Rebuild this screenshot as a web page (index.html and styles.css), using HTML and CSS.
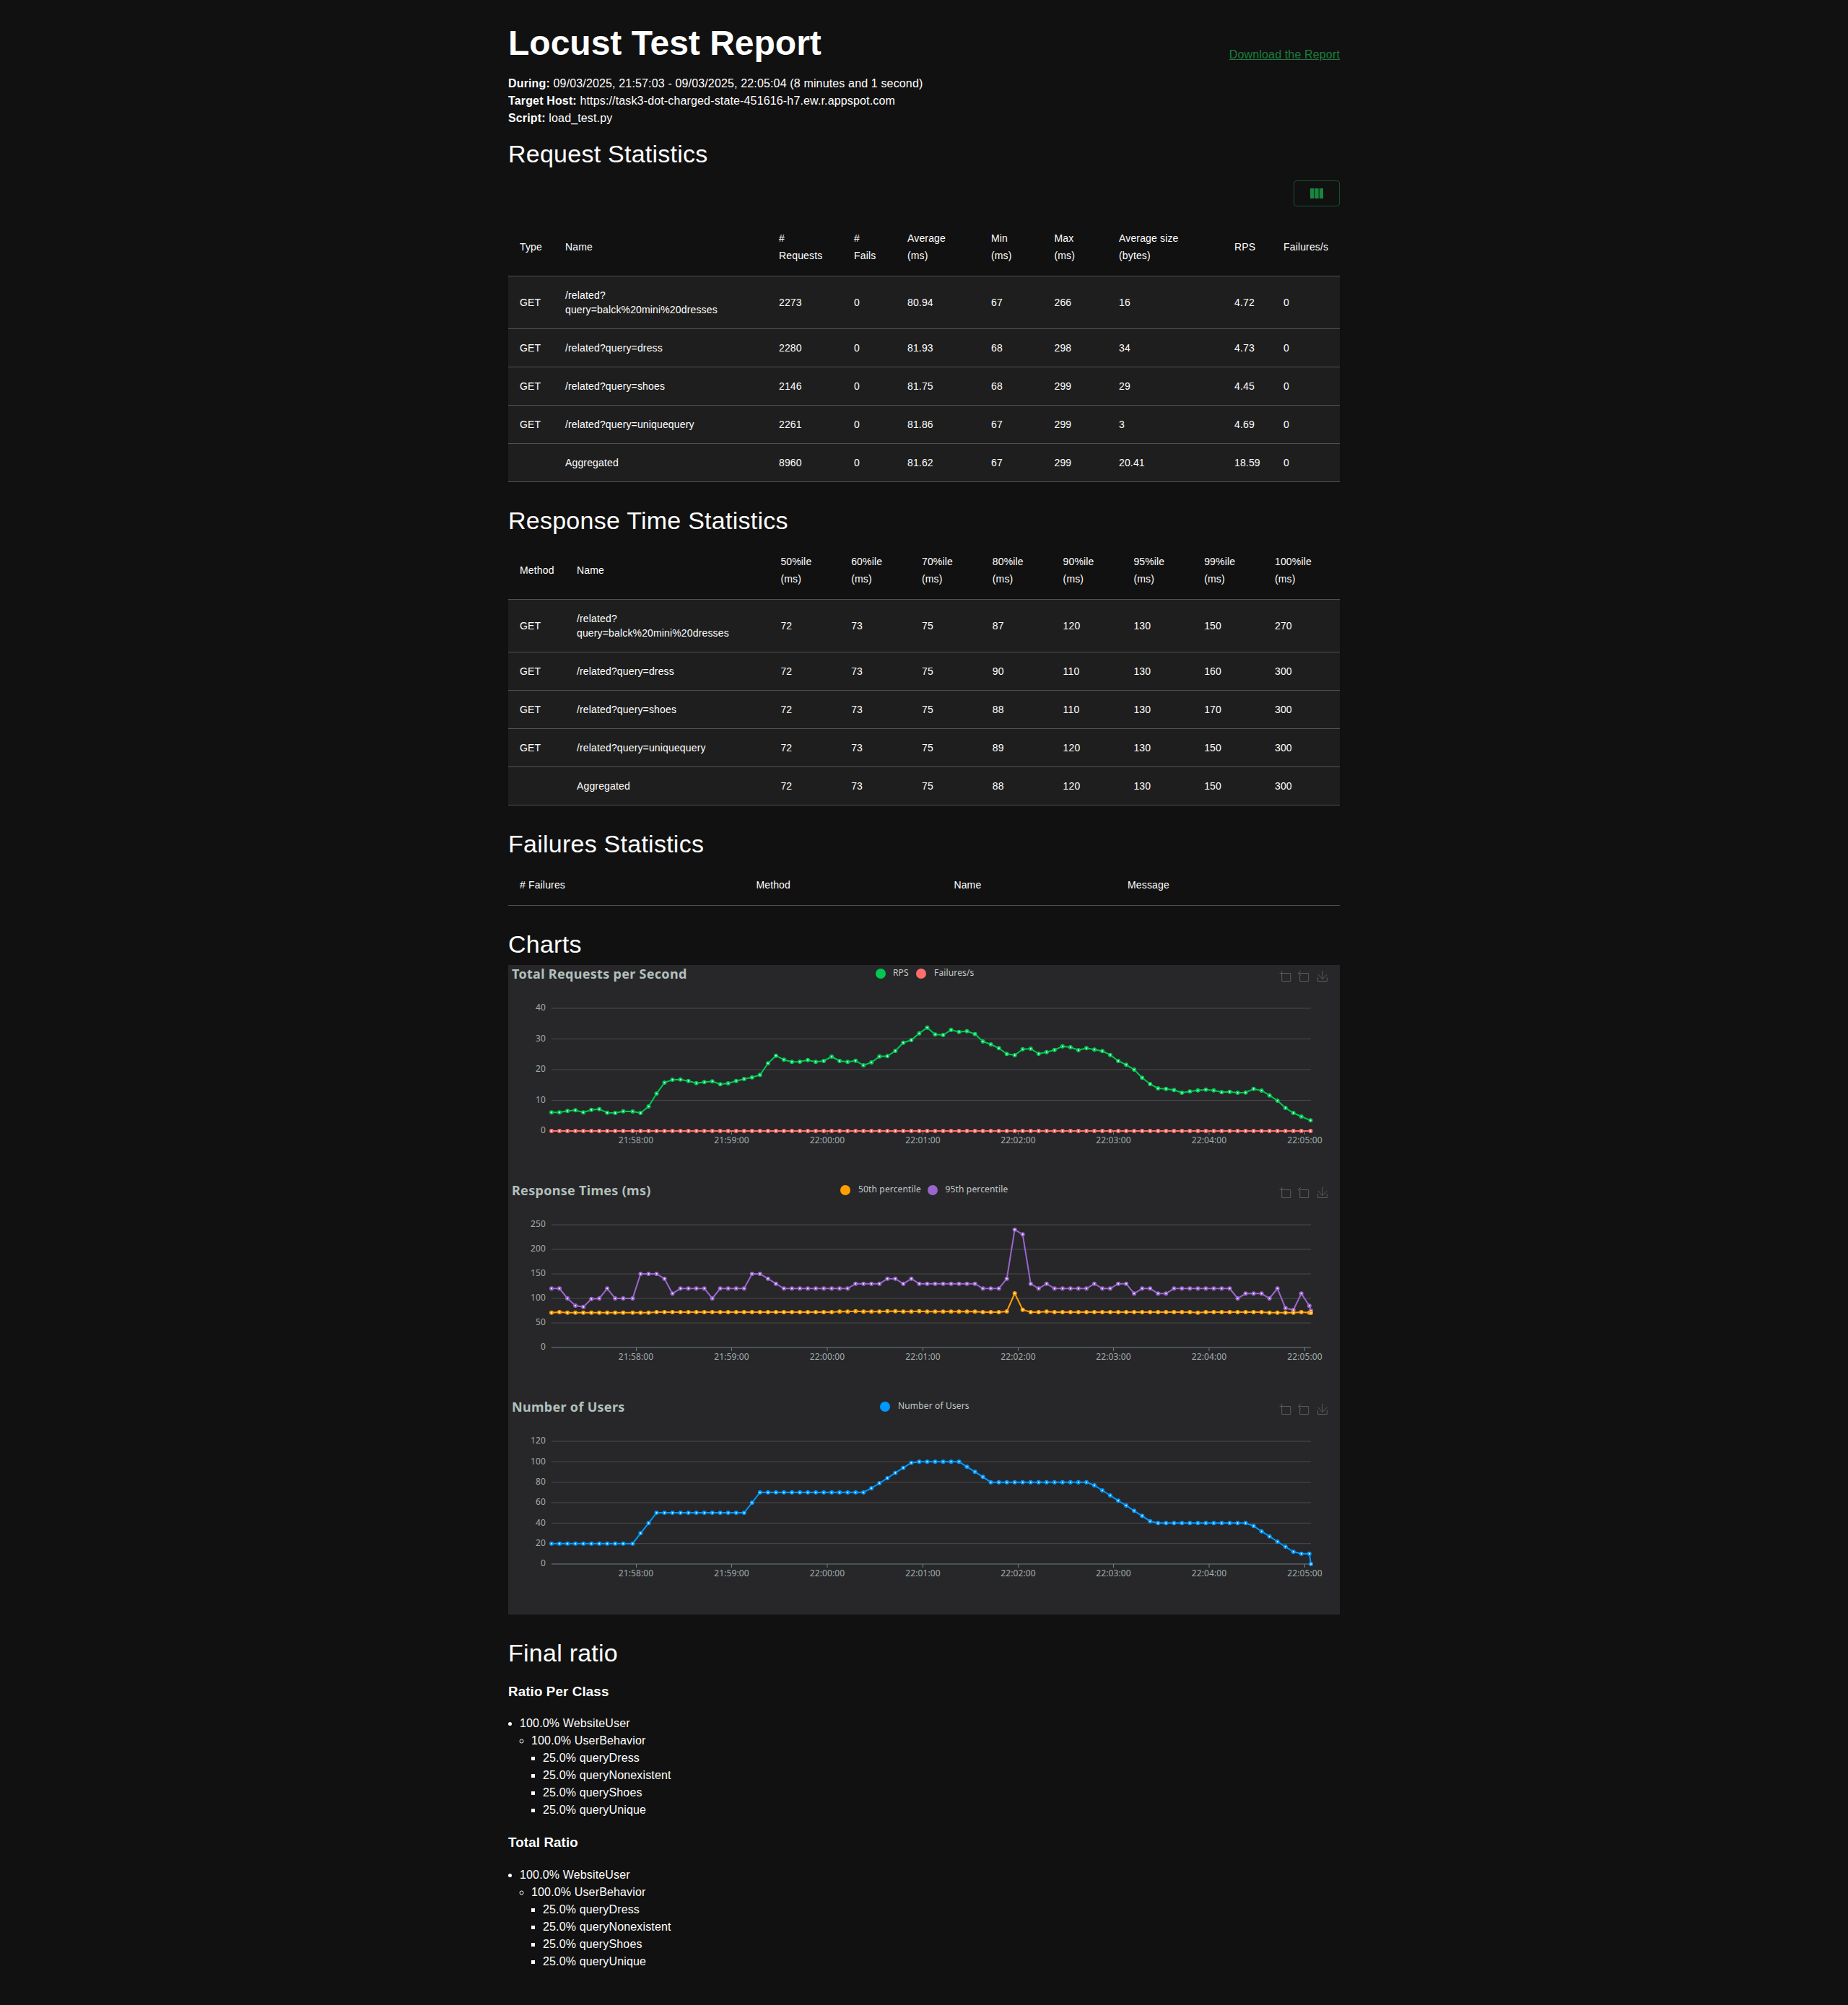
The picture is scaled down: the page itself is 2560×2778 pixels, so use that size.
FILE: index.html
```html
<!DOCTYPE html>
<html lang="en">
<head>
<meta charset="utf-8">
<title>Locust Test Report</title>
<link rel="stylesheet" href="styles.css">
</head>
<body>
<main class="report">
  <header class="top">
    <h1>Locust Test Report</h1>
    <a class="download" href="#">Download the Report</a>
  </header>
  <div class="meta">
    <p><b>During:</b> 09/03/2025, 21:57:03 - 09/03/2025, 22:05:04 (8 minutes and 1 second)</p>
    <p><b>Target Host:</b> https://task3-dot-charged-state-451616-h7.ew.r.appspot.com</p>
    <p><b>Script:</b> load_test.py</p>
  </div>

  <h2>Request Statistics</h2>
  <div class="tools">
    <button class="columns" type="button" aria-label="Columns">
      <svg viewBox="0 0 24 24" width="24" height="24"><path d="M14.67 5v14H9.33V5h5.34zm1 14H21V5h-5.33v14zm-7.34 0V5H3v14h5.33z"/></svg>
    </button>
  </div>
  <table class="stats requests">
    <thead>
      <tr><th>Type</th><th>Name</th><th>#<br>Requests</th><th>#<br>Fails</th><th>Average<br>(ms)</th><th>Min<br>(ms)</th><th>Max<br>(ms)</th><th>Average size<br>(bytes)</th><th>RPS</th><th>Failures/s</th></tr>
    </thead>
    <tbody>
      <tr><td>GET</td><td>/related?<br>query=balck%20mini%20dresses</td><td>2273</td><td>0</td><td>80.94</td><td>67</td><td>266</td><td>16</td><td>4.72</td><td>0</td></tr>
      <tr><td>GET</td><td>/related?query=dress</td><td>2280</td><td>0</td><td>81.93</td><td>68</td><td>298</td><td>34</td><td>4.73</td><td>0</td></tr>
      <tr><td>GET</td><td>/related?query=shoes</td><td>2146</td><td>0</td><td>81.75</td><td>68</td><td>299</td><td>29</td><td>4.45</td><td>0</td></tr>
      <tr><td>GET</td><td>/related?query=uniquequery</td><td>2261</td><td>0</td><td>81.86</td><td>67</td><td>299</td><td>3</td><td>4.69</td><td>0</td></tr>
      <tr><td></td><td>Aggregated</td><td>8960</td><td>0</td><td>81.62</td><td>67</td><td>299</td><td>20.41</td><td>18.59</td><td>0</td></tr>
    </tbody>
  </table>

  <h2 class="section">Response Time Statistics</h2>
  <table class="stats times">
    <thead>
      <tr><th>Method</th><th>Name</th><th>50%ile<br>(ms)</th><th>60%ile<br>(ms)</th><th>70%ile<br>(ms)</th><th>80%ile<br>(ms)</th><th>90%ile<br>(ms)</th><th>95%ile<br>(ms)</th><th>99%ile<br>(ms)</th><th>100%ile<br>(ms)</th></tr>
    </thead>
    <tbody>
      <tr><td>GET</td><td>/related?<br>query=balck%20mini%20dresses</td><td>72</td><td>73</td><td>75</td><td>87</td><td>120</td><td>130</td><td>150</td><td>270</td></tr>
      <tr><td>GET</td><td>/related?query=dress</td><td>72</td><td>73</td><td>75</td><td>90</td><td>110</td><td>130</td><td>160</td><td>300</td></tr>
      <tr><td>GET</td><td>/related?query=shoes</td><td>72</td><td>73</td><td>75</td><td>88</td><td>110</td><td>130</td><td>170</td><td>300</td></tr>
      <tr><td>GET</td><td>/related?query=uniquequery</td><td>72</td><td>73</td><td>75</td><td>89</td><td>120</td><td>130</td><td>150</td><td>300</td></tr>
      <tr><td></td><td>Aggregated</td><td>72</td><td>73</td><td>75</td><td>88</td><td>120</td><td>130</td><td>150</td><td>300</td></tr>
    </tbody>
  </table>

  <h2 class="section">Failures Statistics</h2>
  <table class="stats failures">
    <thead>
      <tr><th># Failures</th><th>Method</th><th>Name</th><th>Message</th></tr>
    </thead>
  </table>

  <h2 class="section">Charts</h2>
  <div class="charts">
    <svg class="chart" viewBox="0 0 1152 300" width="1152" height="300">
      <defs>
        <marker id="m-green" markerUnits="userSpaceOnUse" markerWidth="8" markerHeight="8" refX="4" refY="4" viewBox="0 0 8 8"><circle class="dot green" cx="4" cy="4" r="2"/></marker>
        <marker id="m-red" markerUnits="userSpaceOnUse" markerWidth="8" markerHeight="8" refX="4" refY="4" viewBox="0 0 8 8"><circle class="dot red" cx="4" cy="4" r="2"/></marker>
        <marker id="m-orange" markerUnits="userSpaceOnUse" markerWidth="8" markerHeight="8" refX="4" refY="4" viewBox="0 0 8 8"><circle class="dot orange" cx="4" cy="4" r="2"/></marker>
        <marker id="m-purple" markerUnits="userSpaceOnUse" markerWidth="8" markerHeight="8" refX="4" refY="4" viewBox="0 0 8 8"><circle class="dot purple" cx="4" cy="4" r="2"/></marker>
        <marker id="m-blue" markerUnits="userSpaceOnUse" markerWidth="8" markerHeight="8" refX="4" refY="4" viewBox="0 0 8 8"><circle class="dot blue" cx="4" cy="4" r="2"/></marker>
        <g id="toolbox">
          <path class="tool" d="M1068.5 11.5H1083.7V22.5H1071.7V8"/>
          <path class="tool" d="M1096.7 14.5V22.5H1108.7V11.5H1094.5M1098 8L1094.5 11.5L1098 15"/>
          <path class="tool" d="M1128 8V19.5M1121.7 13L1128 19.5L1134.3 13M1121.7 17V22.5H1134.3V17"/>
        </g>
        <g id="times">
          <path class="tick" d="M177.5 230v5M309.5 230v5M442 230v5M574.5 230v5M706.5 230v5M838.5 230v5M971 230v5M1103.5 230v5"/>
          <text class="axis mid" x="177" y="247">21:58:00</text>
          <text class="axis mid" x="309.5" y="247">21:59:00</text>
          <text class="axis mid" x="442" y="247">22:00:00</text>
          <text class="axis mid" x="574.5" y="247">22:01:00</text>
          <text class="axis mid" x="706.5" y="247">22:02:00</text>
          <text class="axis mid" x="838.5" y="247">22:03:00</text>
          <text class="axis mid" x="971" y="247">22:04:00</text>
          <text class="axis mid" x="1103.5" y="247">22:05:00</text>
        </g>
      </defs>
      <text class="title" x="5" y="19">Total Requests per Second</text>
      <circle class="swatch green" cx="516" cy="12" r="7"/>
      <text class="legend" x="533" y="15">RPS</text>
      <circle class="swatch red" cx="572" cy="12" r="7"/>
      <text class="legend" x="590" y="15">Failures/s</text>
      <use href="#toolbox"/>
      <path class="grid" d="M60 60H1112M60 102.5H1112M60 145H1112M60 187.5H1112"/>
      <path class="axisline" d="M60 230H1112"/>
      <use href="#times"/>
      <text class="axis end" x="52" y="63">40</text>
      <text class="axis end" x="52" y="106">30</text>
      <text class="axis end" x="52" y="148">20</text>
      <text class="axis end" x="52" y="191">10</text>
      <text class="axis end" x="52" y="233">0</text>
      <polyline class="line green" marker-start="url(#m-green)" marker-mid="url(#m-green)" marker-end="url(#m-green)" points="60,204.3 71,204.3 82.1,202.3 93.1,201.3 104.1,204.3 115.2,200.7 126.2,199.7 137.2,204.7 148.2,205 159.3,202.7 172.4,203 183.4,205 194.5,196 205.5,178.3 216.5,163 227.5,159 238.6,158.7 249.6,160.7 260.6,163.7 271.7,162.3 282.7,161.3 293.7,165.3 304.7,164 315.8,160.7 326.8,158 337.8,155.7 348.8,152.3 359.9,136.3 370.9,125.7 381.9,131.3 393,134.3 404,134 415,131.7 426,134.3 437.1,133 448.1,127 459.1,133 470.2,134.3 481.2,132.7 492.2,139 503.2,135 514.3,126.7 525.3,126.3 536.3,119 547.3,107.7 558.4,104 569.4,94.7 580.4,86.7 591.4,96.3 602.5,97 613.5,90 624.5,92.7 635.5,91.7 646.6,95.7 657.6,106 668.6,110 679.7,115.3 690.7,123.3 701.7,125 712.7,116.7 723.8,116 734.8,123 745.8,120.7 756.8,117.7 767.9,112.7 778.9,114 789.9,118 801,115.3 812,117.3 823,119.3 834,124.7 845.1,133 856.1,138.3 867.1,145 878.2,156.3 889.2,165 900.2,171 911.2,171.7 922.3,173.3 933.3,177 944.3,175.3 955.4,173.7 966.4,172.7 977.4,173.7 988.4,176.3 999.5,175.7 1010.5,177 1021.5,176.7 1032.6,171.7 1043.6,174 1054.6,180.7 1065.6,188 1076.7,198 1087.7,205 1098.7,210 1111.5,215.3"/>
      <polyline class="line red" marker-start="url(#m-red)" marker-mid="url(#m-red)" marker-end="url(#m-red)" points="60,230 71,230 82.1,230 93.1,230 104.1,230 115.2,230 126.2,230 137.2,230 148.2,230 159.3,230 172.4,230 183.4,230 194.5,230 205.5,230 216.5,230 227.5,230 238.6,230 249.6,230 260.6,230 271.7,230 282.7,230 293.7,230 304.7,230 315.8,230 326.8,230 337.8,230 348.8,230 359.9,230 370.9,230 381.9,230 393,230 404,230 415,230 426,230 437.1,230 448.1,230 459.1,230 470.2,230 481.2,230 492.2,230 503.2,230 514.3,230 525.3,230 536.3,230 547.3,230 558.4,230 569.4,230 580.4,230 591.4,230 602.5,230 613.5,230 624.5,230 635.5,230 646.6,230 657.6,230 668.6,230 679.7,230 690.7,230 701.7,230 712.7,230 723.8,230 734.8,230 745.8,230 756.8,230 767.9,230 778.9,230 789.9,230 801,230 812,230 823,230 834,230 845.1,230 856.1,230 867.1,230 878.2,230 889.2,230 900.2,230 911.2,230 922.3,230 933.3,230 944.3,230 955.4,230 966.4,230 977.4,230 988.4,230 999.5,230 1010.5,230 1021.5,230 1032.6,230 1043.6,230 1054.6,230 1065.6,230 1076.7,230 1087.7,230 1098.7,230 1111.5,230"/>
    </svg>
    <svg class="chart" viewBox="0 0 1152 300" width="1152" height="300">
      <text class="title" x="5" y="19">Response Times (ms)</text>
      <circle class="swatch orange" cx="467" cy="12" r="7"/>
      <text class="legend" x="485" y="15">50th percentile</text>
      <circle class="swatch purple" cx="588" cy="12" r="7"/>
      <text class="legend" x="605.5" y="15">95th percentile</text>
      <use href="#toolbox"/>
      <path class="grid" d="M60 60H1112M60 94H1112M60 128H1112M60 162H1112M60 196H1112"/>
      <path class="axisline" d="M60 230H1112"/>
      <use href="#times"/>
      <text class="axis end" x="52" y="63">250</text>
      <text class="axis end" x="52" y="97">200</text>
      <text class="axis end" x="52" y="131">150</text>
      <text class="axis end" x="52" y="165">100</text>
      <text class="axis end" x="52" y="199">50</text>
      <text class="axis end" x="52" y="233">0</text>
      <polyline class="line purple" marker-start="url(#m-purple)" marker-mid="url(#m-purple)" marker-end="url(#m-purple)" points="60,148.3 71,148.3 82.1,162 93.1,172 104.1,173.7 115.2,162.7 126.2,162 137.2,148.3 148.2,162 159.3,162 172.4,162 183.4,128 194.5,128 205.5,128 216.5,134.7 227.5,155.3 238.6,148.3 249.6,148.3 260.6,148.3 271.7,148.3 282.7,162 293.7,148.3 304.7,148.3 315.8,148.3 326.8,148.3 337.8,128 348.8,128 359.9,134.7 370.9,141.7 381.9,148.3 393,148.3 404,148.3 415,148.3 426,148.3 437.1,148.3 448.1,148.3 459.1,148.3 470.2,148.3 481.2,141.7 492.2,141.7 503.2,141.7 514.3,141.7 525.3,134.7 536.3,134.7 547.3,141.7 558.4,134.7 569.4,141.7 580.4,141.7 591.4,141.7 602.5,141.7 613.5,141.7 624.5,141.7 635.5,141.7 646.6,141.7 657.6,148.3 668.6,148.3 679.7,148.3 690.7,134.7 701.7,66.7 712.7,73.3 723.8,141.7 734.8,148.3 745.8,141.7 756.8,148.3 767.9,148.3 778.9,148.3 789.9,148.3 801,148.3 812,141.7 823,148.3 834,148.3 845.1,141.7 856.1,141.7 867.1,155.3 878.2,148.3 889.2,148.3 900.2,155.3 911.2,155.3 922.3,148.3 933.3,148.3 944.3,148.3 955.4,148.3 966.4,148.3 977.4,148.3 988.4,148.3 999.5,148.3 1010.5,162 1021.5,155.3 1032.6,155.3 1043.6,155.3 1054.6,162 1065.6,148.3 1076.7,175.3 1087.7,178 1098.7,155.3 1109.8,172.3 1112,179"/>
      <polyline class="line orange" marker-start="url(#m-orange)" marker-mid="url(#m-orange)" marker-end="url(#m-orange)" points="60,181.7 71,181 82.1,181.7 93.1,181.7 104.1,181.7 115.2,181.7 126.2,181.7 137.2,181.7 148.2,181.7 159.3,181.7 172.4,181.7 183.4,181.7 194.5,181.7 205.5,181 216.5,181 227.5,181 238.6,181 249.6,181 260.6,181 271.7,181 282.7,181 293.7,181 304.7,181 315.8,181 326.8,181 337.8,181 348.8,181 359.9,181 370.9,181 381.9,181 393,181 404,181 415,181 426,181 437.1,181 448.1,181 459.1,180.3 470.2,180.3 481.2,179.7 492.2,180.3 503.2,180.3 514.3,180.3 525.3,179.7 536.3,179.7 547.3,180.3 558.4,180.3 569.4,179.7 580.4,180.3 591.4,180.3 602.5,180.3 613.5,180.3 624.5,180.3 635.5,180.3 646.6,180.3 657.6,181 668.6,181 679.7,181 690.7,180 701.7,155 712.7,177.7 723.8,181 734.8,181 745.8,180.3 756.8,181 767.9,181 778.9,181 789.9,181 801,181 812,181 823,181 834,181 845.1,181 856.1,181 867.1,181 878.2,181 889.2,181 900.2,181 911.2,181 922.3,181 933.3,181 944.3,181 955.4,181.7 966.4,181 977.4,181 988.4,181 999.5,181 1010.5,181 1021.5,181 1032.6,181 1043.6,181 1054.6,181.7 1065.6,181.7 1076.7,181.7 1087.7,181.7 1098.7,181 1109.8,181.7 1112,182"/>
    </svg>
    <svg class="chart" viewBox="0 0 1152 300" width="1152" height="300">
      <text class="title" x="5" y="19">Number of Users</text>
      <circle class="swatch blue" cx="522" cy="12" r="7"/>
      <text class="legend" x="540" y="15">Number of Users</text>
      <use href="#toolbox"/>
      <path class="grid" d="M60 60H1112M60 88.3H1112M60 116.7H1112M60 145H1112M60 173.3H1112M60 201.7H1112"/>
      <path class="axisline" d="M60 230H1112"/>
      <use href="#times"/>
      <text class="axis end" x="52" y="63">120</text>
      <text class="axis end" x="52" y="91.5">100</text>
      <text class="axis end" x="52" y="120">80</text>
      <text class="axis end" x="52" y="148">60</text>
      <text class="axis end" x="52" y="176.5">40</text>
      <text class="axis end" x="52" y="205">20</text>
      <text class="axis end" x="52" y="233">0</text>
      <polyline class="line blue" marker-start="url(#m-blue)" marker-mid="url(#m-blue)" marker-end="url(#m-blue)" points="60,201.7 71,201.7 82.1,201.7 93.1,201.7 104.1,201.7 115.2,201.7 126.2,201.7 137.2,201.7 148.2,201.7 159.3,201.7 172.4,201.7 183.4,187.3 194.5,173.3 205.5,159 216.5,159 227.5,159 238.6,159 249.6,159 260.6,159 271.7,159 282.7,159 293.7,159 304.7,159 315.8,159 326.8,159 337.8,145 348.8,130.7 359.9,130.7 370.9,130.7 381.9,130.7 393,130.7 404,130.7 415,130.7 426,130.7 437.1,130.7 448.1,130.7 459.1,130.7 470.2,130.7 481.2,130.7 492.2,130.7 503.2,125 514.3,118 525.3,111 536.3,103.7 547.3,96.7 558.4,89.7 569.4,88.3 580.4,88.3 591.4,88.3 602.5,88.3 613.5,88.3 624.5,88.3 635.5,95.3 646.6,102.3 657.6,109.3 668.6,116.7 679.7,116.7 690.7,116.7 701.7,116.7 712.7,116.7 723.8,116.7 734.8,116.7 745.8,116.7 756.8,116.7 767.9,116.7 778.9,116.7 789.9,116.7 801,116.7 812,121 823,128 834,135 845.1,142.3 856.1,149 867.1,156.3 878.2,163.3 889.2,170.7 900.2,173.3 911.2,173.3 922.3,173.3 933.3,173.3 944.3,173.3 955.4,173.3 966.4,173.3 977.4,173.3 988.4,173.3 999.5,173.3 1010.5,173.3 1021.5,173.3 1032.6,177.3 1043.6,184.7 1054.6,191.7 1065.6,199 1076.7,206 1087.7,213 1098.7,215.7 1109.8,215.7 1112,230"/>
    </svg>
  </div>

  <h2 class="section">Final ratio</h2>
  <h3>Ratio Per Class</h3>
  <ul>
    <li>100.0% WebsiteUser
      <ul>
        <li>100.0% UserBehavior
          <ul>
            <li>25.0% queryDress</li>
            <li>25.0% queryNonexistent</li>
            <li>25.0% queryShoes</li>
            <li>25.0% queryUnique</li>
          </ul>
        </li>
      </ul>
    </li>
  </ul>
  <h3>Total Ratio</h3>
  <ul>
    <li>100.0% WebsiteUser
      <ul>
        <li>100.0% UserBehavior
          <ul>
            <li>25.0% queryDress</li>
            <li>25.0% queryNonexistent</li>
            <li>25.0% queryShoes</li>
            <li>25.0% queryUnique</li>
          </ul>
        </li>
      </ul>
    </li>
  </ul>
</main>
</body>
</html>
```

FILE: styles.css
```css
* { box-sizing: border-box; }

html, body { margin: 0; background: #111111; }

body {
  color: #ffffff;
  font-family: "Liberation Sans", Arial, sans-serif;
  font-size: 16px;
  line-height: 24px;
  letter-spacing: 0.15px;
}

.report {
  width: 1152px;
  margin: 0 auto;
  padding: 32px 0;
}

.top {
  display: flex;
  justify-content: space-between;
  align-items: flex-end;
  margin-bottom: 16px;
}

h1 {
  margin: 0;
  font-size: 48px;
  line-height: 56px;
  font-weight: 700;
  letter-spacing: 0;
}

.download {
  color: #1a7f3c;
  font-size: 16px;
  line-height: 24px;
}

.meta p { margin: 0; }

h2 {
  margin: 16px 0 0;
  font-size: 34px;
  line-height: 42px;
  font-weight: 400;
  letter-spacing: 0.25px;
}

h2.section { margin: 32px 0 8px; }

h3 {
  margin: 18.72px 0;
  font-size: 18.72px;
  line-height: 28px;
  font-weight: 700;
}

ul { margin: 0; padding-left: 16px; }

.report > ul { margin: 16px 0; }

.tools {
  display: flex;
  justify-content: flex-end;
  margin: 16px 0;
}

.columns {
  display: flex;
  align-items: center;
  justify-content: center;
  width: 64px;
  height: 36px;
  padding: 0;
  background: transparent;
  border: 1px solid #1c4f2e;
  border-radius: 4px;
}

.columns svg { fill: #1a8540; }

.stats {
  width: 1152px;
  table-layout: fixed;
  border-collapse: collapse;
  font-size: 14px;
}

.stats th, .stats td {
  padding: 16px;
  text-align: left;
  font-weight: 400;
  border-bottom: 1px solid #515151;
}

.stats th { line-height: 24px; }

.stats td {
  line-height: 20px;
  background: #1e1e1e;
}

.requests th:nth-child(1) { width: 63px; }
.requests th:nth-child(2) { width: 296px; }
.requests th:nth-child(3) { width: 104px; }
.requests th:nth-child(4) { width: 74px; }
.requests th:nth-child(5) { width: 116px; }
.requests th:nth-child(6) { width: 87.5px; }
.requests th:nth-child(7) { width: 89.5px; }
.requests th:nth-child(8) { width: 160px; }
.requests th:nth-child(9) { width: 68px; }
.requests th:nth-child(10) { width: 94px; }

.times th { width: 97.8px; }
.times th:nth-child(1) { width: 79px; }
.times th:nth-child(2) { width: 282.4px; }
.times th:nth-child(10) { width: 106px; }

.failures th:nth-child(1) { width: 327.4px; }
.failures th:nth-child(2) { width: 274px; }
.failures th:nth-child(3) { width: 240.6px; }
.failures th:nth-child(4) { width: 310px; }

.charts { background: #27272a; }

.chart { display: block; font-family: "Noto Sans", "Open Sans", sans-serif; }

.title { font-size: 18px; font-weight: 700; fill: #b3c0bb; letter-spacing: 0.3px; }
.legend { font-size: 12px; fill: #c4cac7; letter-spacing: 0.15px; }
.axis { font-size: 12px; fill: #a3adaa; letter-spacing: 0.1px; }
.mid { text-anchor: middle; }
.end { text-anchor: end; }

.grid { fill: none; stroke: #4a4a4c; stroke-width: 1; }
.axisline, .tick { fill: none; stroke: #6e7f80; stroke-width: 1; }
.tool { fill: none; stroke: #5c5c5e; stroke-width: 1; }

.line { fill: none; stroke-width: 2; }
.line.green { stroke: #00c853; }
.line.red { stroke: #ff6d6d; }
.line.orange { stroke: #ff9f00; }
.line.purple { stroke: #9966cc; }
.line.blue { stroke: #0099ff; }

.dot { fill: #ffffff; stroke-width: 2; }
.dot.green { stroke: #00c853; }
.dot.red { stroke: #ff6d6d; }
.dot.orange { stroke: #ff9f00; }
.dot.purple { stroke: #9966cc; }
.dot.blue { stroke: #0099ff; }

.swatch.green { fill: #00c853; }
.swatch.red { fill: #ff6d6d; }
.swatch.orange { fill: #ff9f00; }
.swatch.purple { fill: #9966cc; }
.swatch.blue { fill: #0099ff; }
```
